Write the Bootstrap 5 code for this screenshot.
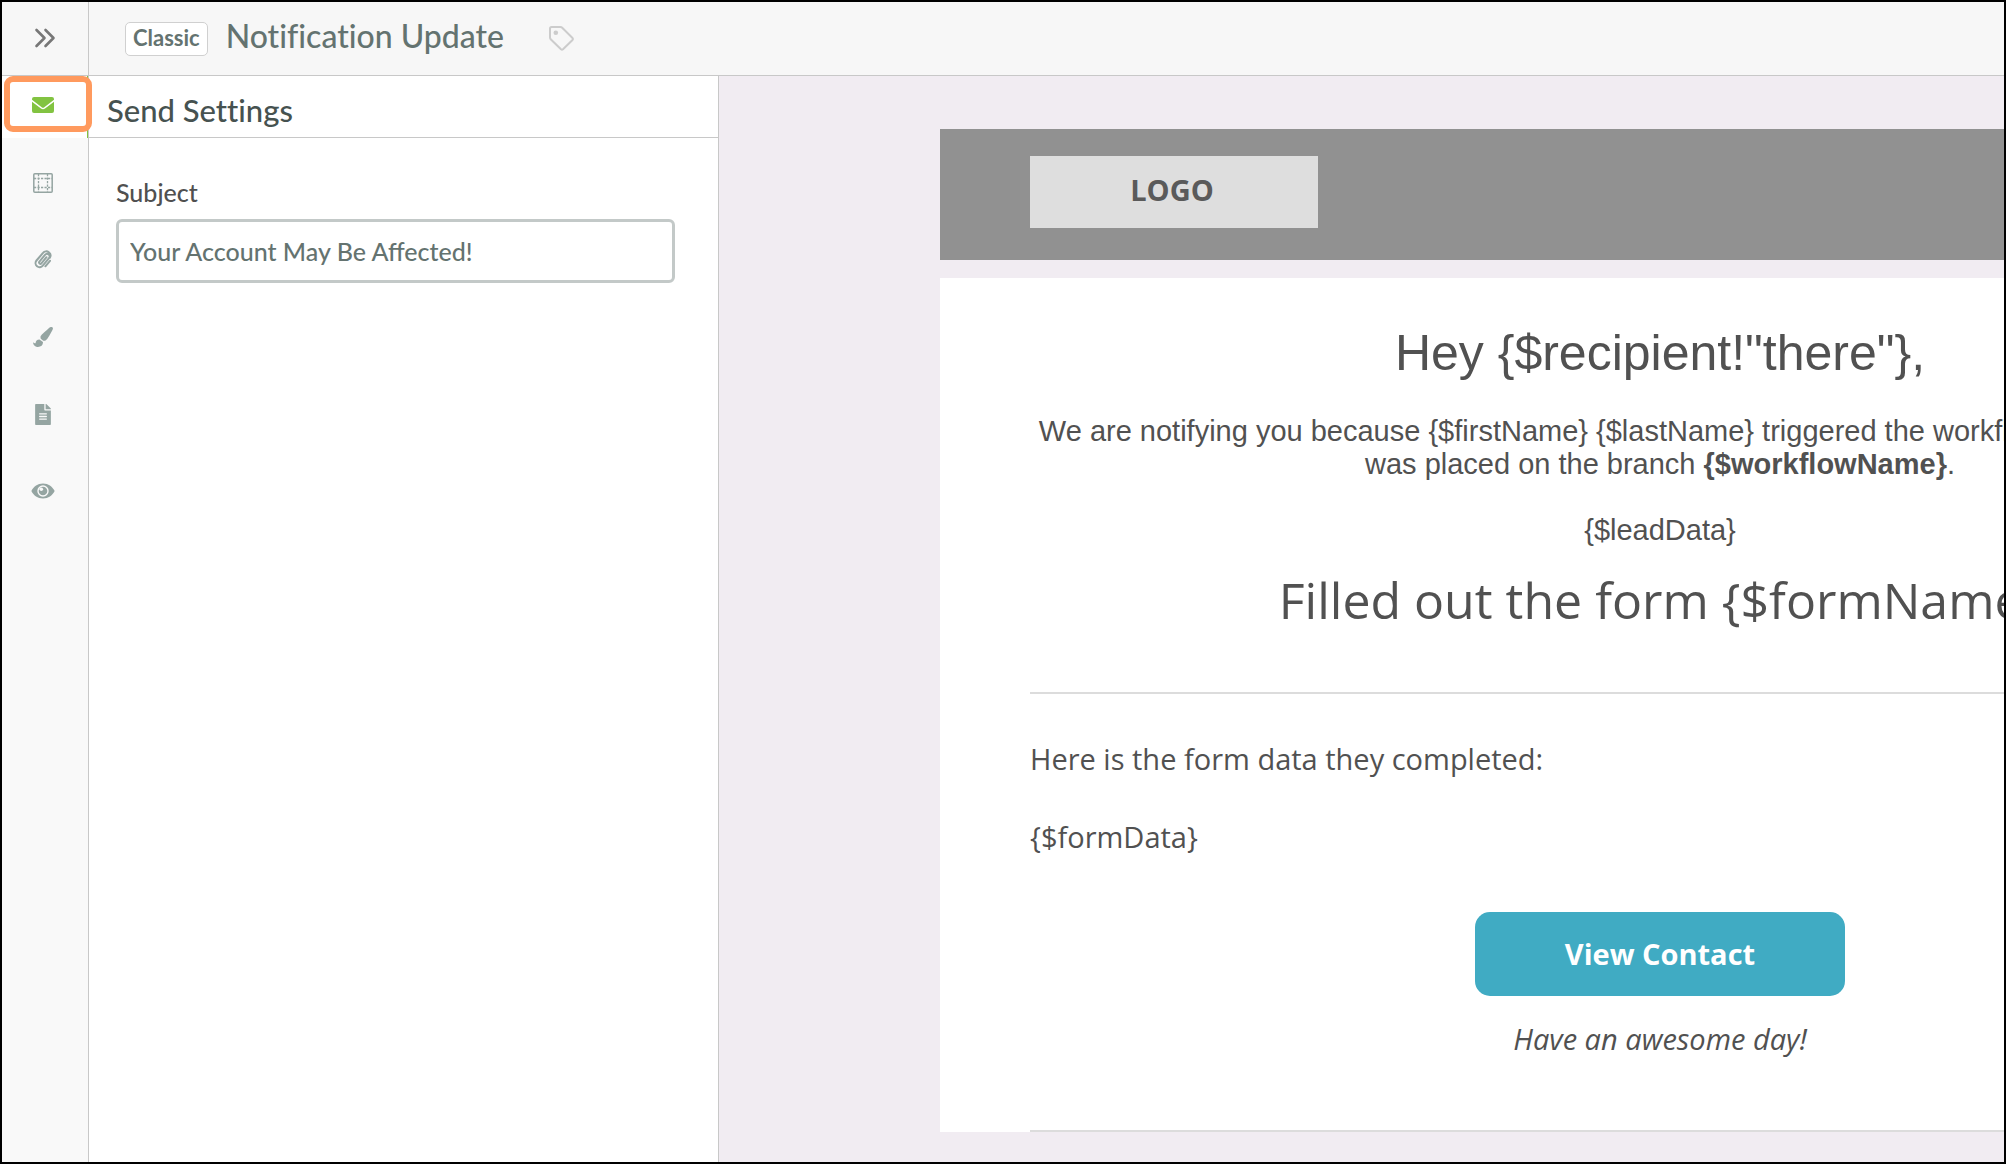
<!DOCTYPE html>
<html lang="en">
<head>
<meta charset="utf-8">
<meta name="viewport" content="width=device-width, initial-scale=1">
<title>Notification Update</title>
<link href="https://cdn.jsdelivr.net/npm/bootstrap@5.3.0/dist/css/bootstrap.min.css" rel="stylesheet">
<style>
  body { font-family: Lato, "Liberation Sans", sans-serif; color: #4d5a58; font-variant-ligatures: none; }
  .app-shell { border: 2px solid #000; background: #fff; }
  .line-start { border-left: 1px solid #c8c8c8; }
  .line-end { border-right: 1px solid #c8c8c8; }
  .line-bottom { border-bottom: 1px solid #c8c8c8; }

  .top-bar { height: 74px; background: #f7f7f7; }
  .expand-btn { width: 86px; padding: 0 0 4px; }
  .page-type { height: 34px; padding: 0 7px; margin-left: 36px; border: 1px solid #d0d0d0; border-radius: 5px; background: #fff; color: #647370; font-size: 22px; font-weight: 700; line-height: 30px; }
  .page-title { margin: 0 0 5px 18px; color: #647370; font-size: 32px; font-weight: 500; line-height: 40px; }
  .tag-btn { margin: 0 0 2px 43px; }

  .rail { width: 86px; gap: 15px; background: #f9f9f9; }
  .rail-item { height: 62px; padding: 0 4px 4px 0; color: #95a5a2; }
  .rail-item.active { margin-bottom: 1px; background: #fff; border-right: 1px solid #82c341; color: #82c341; }
  .highlight-ring { position: absolute; inset: 0 -5px 6px 2px; border: 6px solid #ff9a5e; border-radius: 9px; pointer-events: none; }

  .settings { width: 631px; }
  .settings-title { height: 62px; margin: 0; padding: 12px 0 0 18px; color: #465250; font-size: 31px; font-weight: 500; line-height: 44px; }
  .settings-form { padding: 39px 43px 0 27px; }
  .field-label { margin-bottom: 12px; color: #505050; font-size: 25px; font-weight: 500; line-height: 30px; }
  .field-input { height: 64px; padding: 0 11px; border: 3px solid #c3c9c8; border-radius: 6px; color: #647370; font-size: 25px; font-weight: 500; }

  .preview { background: #f1ecf2; padding: 53px 0 30px 221px; }
  .email { width: 1440px; color: #515151; font-family: "Open Sans", "Noto Sans", sans-serif; font-size: 29px; line-height: 39px; }
  .email-head { height: 131px; margin-bottom: 18px; padding: 27px 90px; background: #919191; }
  .logo-box { width: 288px; height: 72px; padding: 0 4px 5px 0; background: #dedede; color: #5a5a5a; font-weight: 700; }
  .email-body { padding: 46px 90px 0; background: #fff; }
  .arial { font-family: "Liberation Sans", Arial, sans-serif; line-height: 33px; }
  .email-h { margin: 0; font-size: 50px; font-weight: 400; line-height: 68px; }
  .email-h.arial { margin-bottom: 33px; line-height: 58px; }
  .form-heading { padding: 19px 0 58px; }
  .email-rule { height: 2px; margin: 0; border: 0; background: #dcdcdc; opacity: 1; }
  .form-data { padding: 45px 0 56px; }
  .contact-btn { width: 370px; height: 84px; border-radius: 15px; background: #40abc3; color: #fff; font-size: 29px; font-weight: 700; }
  .contact-btn:hover { background: #3798af; color: #fff; }
  .sign-off { padding: 23px 0 72px; }
</style>
<script src="https://cdn.jsdelivr.net/npm/bootstrap@5.3.0/dist/js/bootstrap.bundle.min.js"></script>
</head>
<body>
<div class="app-shell d-flex flex-column vh-100 overflow-hidden">
  <header class="top-bar d-flex align-items-stretch flex-shrink-0 line-bottom">
    <button type="button" class="expand-btn btn rounded-0 border-0" aria-label="Expand menu">
      <svg width="22" height="20" viewBox="0 0 22 20" fill="none" stroke="#777" stroke-width="2.600" stroke-linecap="round" stroke-linejoin="round"><path d="M2.500 2l8 8-8 8M11.500 2l8 8-8 8"/></svg>
    </button>
    <div class="d-flex align-items-center line-start">
      <span class="page-type">Classic</span>
      <h1 class="page-title">Notification Update</h1>
      <button type="button" class="tag-btn btn p-0 border-0 lh-1" aria-label="Add tag">
        <svg width="28" height="28" viewBox="0 0 28 28" fill="none" stroke="#ccc" stroke-width="2" stroke-linejoin="round"><path d="M3 4.500Q3 3 4.500 3H13.500Q14.500 3 15.200 3.700L25.500 14Q26.400 15 25.500 16L16 25.300Q15 26.200 14 25.300L3.700 15.200Q3 14.500 3 13.500z"/><circle cx="8.800" cy="8.800" r="2.300" fill="#ccc" stroke="none"/></svg>
      </button>
    </div>
  </header>

  <div class="d-flex flex-grow-1 overflow-hidden">
    <nav class="rail d-flex flex-column flex-shrink-0" aria-label="Editor sections">
      <a href="#send" class="rail-item active position-relative d-flex align-items-center justify-content-center" aria-label="Send settings">
        <svg width="22" height="16" viewBox="0 0 22 16" fill="currentColor"><path d="M2 0h18a2 2 0 0 1 2 2v.8L12.300 10.200q-1.300 1-2.600 0L0 2.800V2a2 2 0 0 1 2-2z"/><path d="M0 4.800l9 6.800q2 1.400 4 0l9-6.800V14a2 2 0 0 1-2 2H2a2 2 0 0 1-2-2z"/></svg>
        <span class="highlight-ring"></span>
      </a>
      <a href="#layout" class="rail-item d-flex align-items-center justify-content-center" aria-label="Layout">
        <svg width="20" height="20" viewBox="0 0 20 20" fill="none" stroke="currentColor"><rect x=".8" y=".8" width="18.400" height="18.400" rx="1" stroke-width="1.500"/><path stroke-width="1.300" stroke-dasharray="2.200 1.300" d="M1 5.500h18M1 14.500h18M5.500 1v18M14.500 1v18"/></svg>
      </a>
      <a href="#attachments" class="rail-item d-flex align-items-center justify-content-center" aria-label="Attachments">
        <svg width="18" height="20" viewBox="0 0 18 20" fill="none" stroke="currentColor" stroke-width="2" stroke-linecap="round"><path d="M12.500 7.200L7.400 13.300a1.300 1.300 0 0 1-2-1.700L11 4.800a2.600 2.600 0 0 1 4 3.400l-6.200 7.500a4 4 0 0 1-6.300-5.200L9 2.900a4.200 4.200 0 0 1 5.800-.7 4.200 4.200 0 0 1 1 5.500M16 10.800l-4.600 5.500"/></svg>
      </a>
      <a href="#design" class="rail-item d-flex align-items-center justify-content-center" aria-label="Design">
        <svg width="20" height="20" viewBox="0 0 512 512" fill="currentColor"><path d="M457 0c-15 0-29 7-40 16C213 199 192 215 192 263c0 12 3 24 7 35l64 53c7 2 14 3 22 3 55 0 87-40 210-270 8-16 16-32 16-50C512 14 485 0 457 0zM166 320c-64 2-99 43-99 93-18 13-42 0-65-22 0 66 52 121 126 121 75 0 128-43 128-119 0-4-1-7-1-10z"/></svg>
      </a>
      <a href="#text" class="rail-item d-flex align-items-center justify-content-center" aria-label="Plain text">
        <svg width="16" height="21" viewBox="0 0 384 512" fill="currentColor"><path d="M224 136V0H24C11 0 0 11 0 24v464c0 13 11 24 24 24h336c13 0 24-11 24-24V160H248c-13 0-24-11-24-24zm64 236c0 7-5 12-12 12H108c-7 0-12-5-12-12v-8c0-7 5-12 12-12h168c7 0 12 5 12 12zm0-64c0 7-5 12-12 12H108c-7 0-12-5-12-12v-8c0-7 5-12 12-12h168c7 0 12 5 12 12zm0-72v8c0 7-5 12-12 12H108c-7 0-12-5-12-12v-8c0-7 5-12 12-12h168c7 0 12 5 12 12zm96-114v6H256V0h6c6 0 12 3 17 7l98 98c4 4 7 10 7 17z"/></svg>
      </a>
      <a href="#preview" class="rail-item d-flex align-items-center justify-content-center" aria-label="Preview">
        <svg width="24" height="16" viewBox="0 0 24 16"><path fill="currentColor" d="M12 0.500C6.500 0.500 2.800 3.600.7 7.200q-.5.800 0 1.600C2.800 12.400 6.500 15.500 12 15.500s9.200-3.100 11.300-6.700q.5-.8 0-1.600C21.200 3.600 17.500.5 12 .5z"/><circle cx="12" cy="8" r="5" fill="none" stroke="#f9f9f9" stroke-width="1.400"/><circle cx="10.300" cy="6.300" r="1.800" fill="#f9f9f9"/></svg>
      </a>
    </nav>

    <section class="settings flex-shrink-0 line-start line-end">
      <h2 class="settings-title line-bottom">Send Settings</h2>
      <form class="settings-form">
        <label for="subject" class="field-label d-block">Subject</label>
        <input id="subject" type="text" class="field-input form-control" value="Your Account May Be Affected!">
      </form>
    </section>

    <main class="preview flex-grow-1 overflow-hidden">
      <article class="email">
        <div class="email-head">
          <div class="logo-box d-flex align-items-center justify-content-center">LOGO</div>
        </div>
        <div class="email-body">
          <div class="text-center">
            <h2 class="email-h arial">Hey {$recipient!"there"},</h2>
            <p class="arial mb-0">We are notifying you because {$firstName} {$lastName} triggered the workflow {$workflow} and it<br>was placed on the branch <b>{$workflowName}</b>.<br><br>{$leadData}</p>
            <h2 class="email-h form-heading">Filled out the form {$formName}</h2>
          </div>
          <hr class="email-rule">
          <p class="mb-0 form-data">Here is the form data they completed:<br><br>{$formData}</p>
          <div class="text-center">
            <button type="button" class="contact-btn btn border-0 d-block mx-auto">View Contact</button>
            <p class="sign-off fst-italic mb-0">Have an awesome day!</p>
          </div>
          <hr class="email-rule">
        </div>
      </article>
    </main>
  </div>
</div>
</body>
</html>
